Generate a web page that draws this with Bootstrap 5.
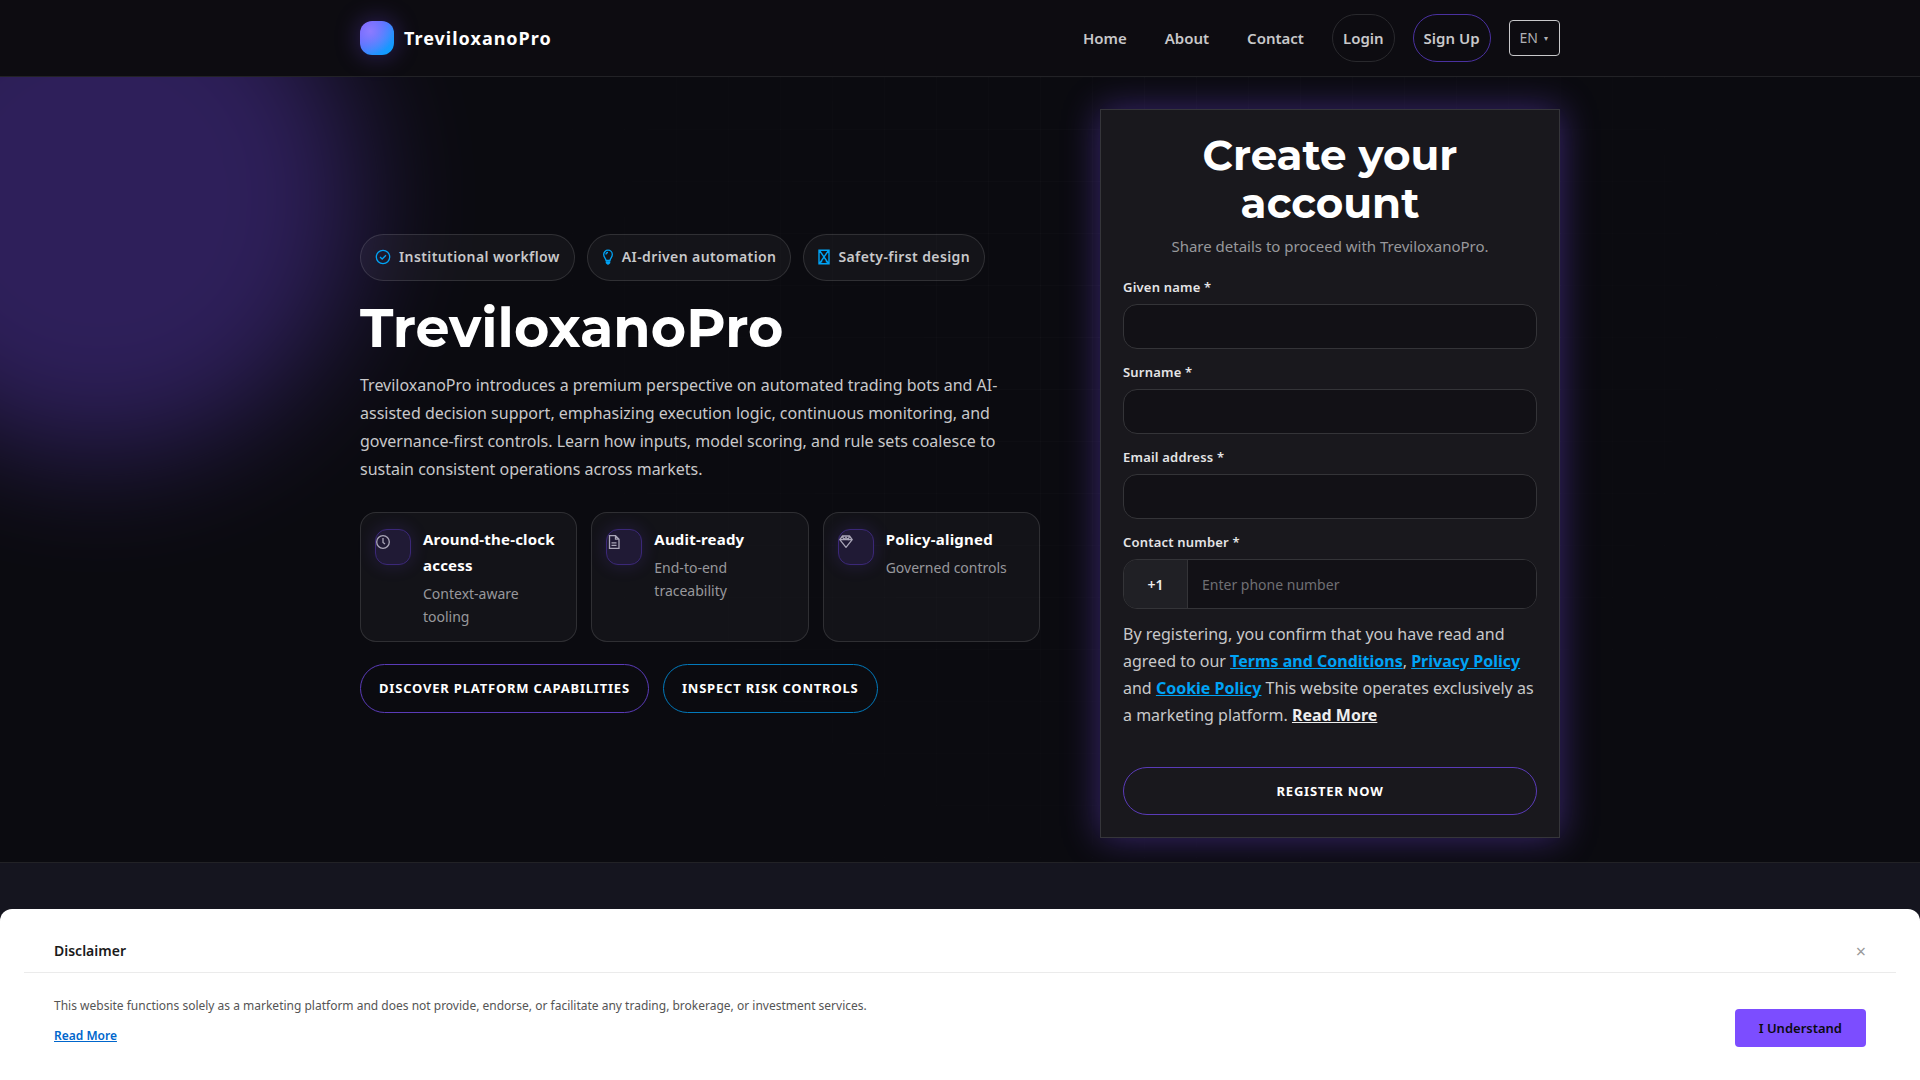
<!DOCTYPE html>
<html lang="en">
<head>
<meta charset="utf-8">
<meta name="viewport" content="width=device-width, initial-scale=1">
<title>TreviloxanoPro</title>
<link href="https://cdn.jsdelivr.net/npm/bootstrap@5.3.0/dist/css/bootstrap.min.css" rel="stylesheet">
<style>
:root{--violet:#7c4dff;--azure:#00a3f5;--soft:#c8c8ca;--muted:#98989c;--edge:rgba(255,255,255,.12)}
body{background:#0b0b10;color:var(--soft);font-family:"Noto Sans","Open Sans",sans-serif;font-size:16px;line-height:27px}
h1,h2{font-family:Montserrat,Inter,"Noto Sans",sans-serif;font-weight:700;color:#fff}
.shell{width:100%;max-width:1248px;padding:0 24px;margin:0 auto}
.site-head{background:#0d0c11;border-bottom:1px solid #222226;z-index:2}
.head-row{min-height:76px}
.brand{gap:10px}
.brand-mark{width:34px;height:34px;border-radius:12px;background:radial-gradient(circle at 30% 30%,#8c7bff,transparent 70%),linear-gradient(135deg,#7c4dff,#2f8dff 60%,#00a3ff);box-shadow:0 0 24px rgba(124,77,255,.35)}
.brand-name{font-size:18px;font-weight:700;color:#fff;letter-spacing:1px}
.menu{gap:18px}
.menu-link{font-size:15px;font-weight:600;line-height:26px;padding:10px;color:var(--soft);text-decoration:none;white-space:nowrap}
.menu-pill{border:1px solid #29292d;border-radius:24px}
.menu-pill.accent{border-color:#4a31a0}
.lang-btn{border:1px solid #c8c8ca;border-radius:4px;background:none;color:#b0b0b4;font-size:14px;line-height:22px;padding:6px 11px 6px 10px;gap:6px}
.lang-btn span{font-size:8px}
.hero{padding:32px 0 24px;overflow:hidden;border-bottom:1px solid #222226}
.hero::before{content:"";position:absolute;left:-160px;top:-140px;width:520px;height:520px;border-radius:50%;background:var(--violet);opacity:.31;filter:blur(60px)}
.hero::after{content:"";position:absolute;inset:0;background-image:linear-gradient(90deg,rgba(255,255,255,.02) 1px,transparent 1px),linear-gradient(rgba(255,255,255,.02) 1px,transparent 1px);background-size:52px 52px;-webkit-mask-image:radial-gradient(circle at 60% 30%,#000,transparent 60%);mask-image:radial-gradient(circle at 60% 30%,#000,transparent 60%);pointer-events:none}
.hero-row{z-index:1;gap:60px}
.tag-row{gap:12px}
.tag{border:1px solid var(--edge);background:rgba(255,255,255,.04);border-radius:24px;padding:10px 14px 11px;font-size:14px;font-weight:600;line-height:24px;letter-spacing:.4px}
.tag svg{color:var(--azure)}
.hero h1{font-size:54px;line-height:62px;margin:16px 0 12px}
.intro{font-size:16px;line-height:28px;margin:0 0 29px}
.perk-row{gap:14px}
.perk{border:1px solid var(--edge);background:rgba(255,255,255,.035);border-radius:16px;padding:13px 14px;gap:12px;flex:1 1 0}
.perk-icon{width:36px;height:36px;flex:none;margin-top:3px;border-radius:12px;border:1px solid #3b2878;background:#201a35;box-shadow:0 0 18px rgba(124,77,255,.18);padding-top:4px}
.perk-icon svg{display:block;color:#aaa6b8}
.perk-title{font-size:15px;font-weight:700;line-height:26px;color:#fff;margin-bottom:4px;letter-spacing:.2px}
.perk-note{font-size:14px;line-height:23px;color:var(--muted)}
.cta-row{gap:14px;margin-top:22px}
.cta{border:1px solid #5a3bb8;border-radius:25px;color:#fff;font-size:13px;font-weight:700;line-height:22px;padding:12px 18px;letter-spacing:.8px;text-transform:uppercase;text-decoration:none;background:none}
.cta-row .cta{line-height:23px}
.cta.azure{border-color:#0279bb}
.signup{width:460px;flex:none;background:#19181d;border:1px solid #35353a;padding:21px 22px 22px;box-shadow:0 0 34px rgba(124,77,255,.4)}
.signup h2{font-size:42px;line-height:48px;margin:0 0 6px}
.signup-sub{font-size:15px;line-height:26px;color:var(--muted);margin-bottom:17px}
.field{margin-bottom:12px}
.field label{display:block;font-size:13px;font-weight:600;line-height:22px;color:#e4e4e6;margin-bottom:6px;letter-spacing:.2px}
.field input{display:block;width:100%;height:45px;border:1px solid #343438;border-radius:14px;background:#121116;color:#fff;padding:0 14px;font-size:14px}
.phone{border:1px solid #343438;border-radius:14px;height:50px;overflow:hidden}
.phone span{width:64px;flex:none;background:#202025;border-right:1px solid #343438;color:#eee;font-size:14px;font-weight:600}
.field .phone input{border:0;border-radius:0;height:48px}
.phone input::placeholder{color:#6f6f73}
.terms{margin:0 0 38px}
.terms a{color:var(--azure);font-weight:700}
.terms a.plain{color:#eee}
.below{background:#15151f}
.notice{background:#fff;border-radius:12px 12px 0 0;padding:24px 24px 31px;color:#555}
.notice-head{border-bottom:1px solid #ebebeb;padding:6px 30px 9px}
.notice-head h5{font-size:14px;font-weight:600;line-height:24px;color:#1a1a1a;margin:0}
.notice-close{border:0;background:none;padding:0;color:#999;font-size:18px;line-height:24px}
.notice-body{padding:19px 30px 0;font-size:12px}
.notice-body p{margin:0 0 3px}
.notice-body a{color:#0066cc;font-weight:600}
.notice-ok{border:0;border-radius:4px;background:var(--violet);color:#0b0b10;font-size:13px;font-weight:600;line-height:22px;padding:8px 24px;margin-bottom:2px}
</style>
<script src="https://cdn.jsdelivr.net/npm/bootstrap@5.3.0/dist/js/bootstrap.bundle.min.js"></script>
</head>
<body class="d-flex flex-column min-vh-100">
<header class="site-head position-relative">
  <div class="shell head-row d-flex align-items-center justify-content-between">
    <a href="#" class="brand d-flex align-items-center text-decoration-none"><span class="brand-mark"></span><span class="brand-name">TreviloxanoPro</span></a>
    <nav class="menu d-flex align-items-center">
      <a class="menu-link" href="#">Home</a><a class="menu-link" href="#">About</a><a class="menu-link" href="#">Contact</a>
      <a class="menu-link menu-pill" href="#">Login</a><a class="menu-link menu-pill accent" href="#">Sign Up</a>
      <button class="lang-btn d-flex align-items-center" type="button">EN <span>▾</span></button>
    </nav>
  </div>
</header>
<main class="hero position-relative">
  <div class="shell hero-row position-relative d-flex align-items-center">
    <section class="flex-fill">
      <div class="tag-row d-flex">
        <div class="tag d-flex align-items-center gap-2"><svg width="16" height="16" viewBox="0 0 16 16" fill="none" stroke="currentColor" stroke-width="1.3"><circle cx="8" cy="8" r="6.700"/><path d="M5 8l2.200 2L11 6.200"/></svg>Institutional workflow</div>
        <div class="tag d-flex align-items-center gap-2"><svg width="12" height="16" viewBox="0 0 12 16" fill="none" stroke="currentColor" stroke-width="1.3"><path d="M4 11.500C4 9.500 1.700 8.500 1.700 5.500a4.300 4.300 0 0 1 8.600 0C10.300 8.500 8 9.500 8 11.500zM4 5.500c0-1.200.8-2 2-2"/><path d="M4 12.500h4v1.500l-1 1.200H5L4 14z" fill="currentColor" stroke-width=".6"/></svg>AI-driven automation</div>
        <div class="tag d-flex align-items-center gap-2"><svg width="12" height="16" viewBox="0 0 12 16" fill="none" stroke="currentColor" stroke-width="1.4"><path d="M1 1.200h10v13.600H1zM1.500 1.500L6 8l4.500-6.500M1.500 14.500L6 8l4.500 6.500M3.500 13.500v-2M8.500 13.500v-2"/></svg>Safety-first design</div>
      </div>
      <h1>TreviloxanoPro</h1>
      <p class="intro">TreviloxanoPro introduces a premium perspective on automated trading bots and AI-assisted decision support, emphasizing execution logic, continuous monitoring, and governance-first controls. Learn how inputs, model scoring, and rule sets coalesce to sustain consistent operations across markets.</p>
      <div class="perk-row d-flex">
        <div class="perk d-flex"><div class="perk-icon"><svg width="16" height="16" viewBox="0 0 16 16" fill="none" stroke="currentColor" stroke-width="1.3"><circle cx="7" cy="8" r="6.300"/><path d="M7 4v4.500l2 1.500"/></svg></div><div><div class="perk-title">Around-the-clock access</div><div class="perk-note">Context-aware tooling</div></div></div>
        <div class="perk d-flex"><div class="perk-icon"><svg width="16" height="16" viewBox="0 0 16 16" fill="none" stroke="currentColor" stroke-width="1.3"><path d="M2.500 1.700h6L12 5.200v9.100H2.500zM8.500 1.700v3.500H12M4.500 8.800h5M4.500 11.300h5"/></svg></div><div><div class="perk-title">Audit-ready</div><div class="perk-note">End-to-end traceability</div></div></div>
        <div class="perk d-flex"><div class="perk-icon"><svg width="16" height="16" viewBox="0 0 16 16" fill="none" stroke="currentColor" stroke-width="1.3" stroke-linejoin="round"><path d="M3.500 2h7l2.700 3.700L7 13.300.8 5.700zM.8 5.700h12.400M3.500 2l1.300 3.700L7 3.500l2.200 2.200L10.500 2"/></svg></div><div><div class="perk-title">Policy-aligned</div><div class="perk-note">Governed controls</div></div></div>
      </div>
      <div class="cta-row d-flex"><a href="#" class="cta">Discover platform capabilities</a><a href="#" class="cta azure">Inspect risk controls</a></div>
    </section>
    <form class="signup">
      <h2 class="text-center">Create your account</h2>
      <div class="signup-sub text-center">Share details to proceed with TreviloxanoPro.</div>
      <div class="field"><label for="fn">Given name *</label><input id="fn" type="text"></div>
      <div class="field"><label for="ln">Surname *</label><input id="ln" type="text"></div>
      <div class="field"><label for="em">Email address *</label><input id="em" type="email"></div>
      <div class="field"><label for="ph">Contact number *</label><div class="phone d-flex"><span class="d-flex align-items-center justify-content-center">+1</span><input id="ph" type="tel" placeholder="Enter phone number"></div></div>
      <p class="terms">By registering, you confirm that you have read and agreed to our <a href="#">Terms and Conditions</a>, <a href="#">Privacy Policy</a> and <a href="#">Cookie Policy</a> This website operates exclusively as a marketing platform. <a href="#" class="plain">Read More</a></p>
      <button type="submit" class="cta w-100">Register now</button>
    </form>
  </div>
</main>
<div class="below flex-grow-1"></div>
<aside class="notice fixed-bottom">
  <div class="notice-head d-flex justify-content-between align-items-center"><h5>Disclaimer</h5><button type="button" class="notice-close" aria-label="Close">×</button></div>
  <div class="notice-body d-flex justify-content-between align-items-end">
    <div><p>This website functions solely as a marketing platform and does not provide, endorse, or facilitate any trading, brokerage, or investment services.</p><a href="#">Read More</a></div>
    <button type="button" class="notice-ok">I Understand</button>
  </div>
</aside>
</body>
</html>
